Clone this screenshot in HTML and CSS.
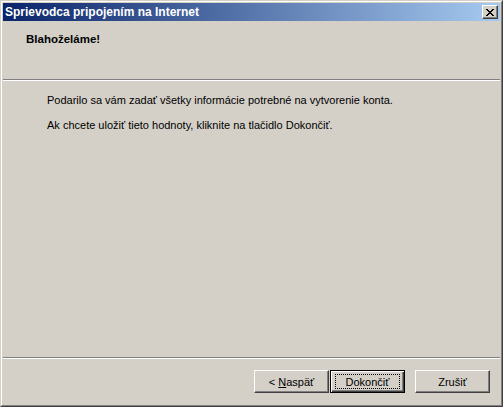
FILE: index.html
```html
<!DOCTYPE html>
<html>
<head>
<meta charset="utf-8">
<link rel="stylesheet" href="styles.css">
</head>
<body>
<div class="window">
  <div class="frame">
    <div class="titlebar">
      <span class="title">Sprievodca pripojením na Internet</span>
      <button class="close" aria-label="Zavrieť">
        <svg width="8" height="7" viewBox="0 0 8 7" shape-rendering="crispEdges">
          <path d="M0 0h2v1h-2zM6 0h2v1h-2zM1 1h2v1h-2zM5 1h2v1h-2zM2 2h4v1h-4zM3 3h2v1h-2zM2 4h4v1h-4zM1 5h2v1h-2zM5 5h2v1h-2zM0 6h2v1h-2zM6 6h2v1h-2z" fill="#000"/>
        </svg>
      </button>
    </div>
    <div class="header">
      <div class="heading">Blahoželáme!</div>
    </div>
    <div class="sep"></div>
    <div class="content">
      <p>Podarilo sa vám zadať všetky informácie potrebné na vytvorenie konta.</p>
      <p>Ak chcete uložiť tieto hodnoty, kliknite na tlačidlo Dokončiť.</p>
    </div>
    <div class="sep"></div>
    <div class="footer">
      <button class="btn">&lt;&nbsp;<u>N</u>aspäť</button>
      <button class="btn default"><span class="focus">Dokončiť</span></button>
      <button class="btn cancel">Zrušiť</button>
    </div>
  </div>
</div>
</body>
</html>
```

FILE: styles.css
```css
html, body {
  margin: 0;
  padding: 0;
  background: #d4d0c8;
}

.window {
  width: 503px;
  height: 407px;
  box-sizing: border-box;
  border: 1px solid;
  border-color: #d4d0c8 #404040 #404040 #d4d0c8;
  background: #d4d0c8;
  font-family: "Liberation Sans", Arial, sans-serif;
  font-size: 11px;
  color: #000;
}

.frame {
  height: 100%;
  box-sizing: border-box;
  border: 1px solid;
  border-color: #ffffff #808080 #808080 #ffffff;
  padding: 1px;
  display: flex;
  flex-direction: column;
}

.titlebar {
  height: 18px;
  flex: none;
  display: flex;
  align-items: center;
  justify-content: space-between;
  padding: 0 2px 0 2px;
  background: linear-gradient(to right, #0a246a, #a6caf0);
  color: #fff;
}

.title {
  font-weight: bold;
  font-size: 12px;
  line-height: 18px;
}

.close {
  width: 16px;
  height: 14px;
  padding: 0;
  margin: 0;
  box-sizing: border-box;
  background: #d4d0c8;
  border: 1px solid;
  border-color: #ffffff #404040 #404040 #ffffff;
  box-shadow: inset -1px -1px #808080;
  display: flex;
  align-items: center;
  justify-content: center;
}

.close svg {
  display: block;
}

.header {
  height: 58px;
  flex: none;
  box-sizing: border-box;
  padding: 12px 0 0 23px;
}

.heading {
  font-weight: bold;
  font-size: 11.5px;
  line-height: 13px;
}

.sep {
  flex: none;
  height: 0;
  border-top: 1px solid #808080;
  border-bottom: 1px solid #ffffff;
}

.content {
  flex: 1;
  box-sizing: border-box;
  padding: 13px 0 0 44px;
}

.content p {
  margin: 0 0 12px 0;
  line-height: 13px;
}

.footer {
  height: 45px;
  flex: none;
  box-sizing: border-box;
  display: flex;
  justify-content: flex-end;
  align-items: flex-start;
  padding: 11px 10px 0 0;
}

.btn {
  width: 75px;
  height: 23px;
  box-sizing: border-box;
  margin: 0;
  padding: 0;
  background: #d4d0c8;
  border: 1px solid;
  border-color: #ffffff #404040 #404040 #ffffff;
  box-shadow: inset -1px -1px #808080;
  font-family: "Liberation Sans", Arial, sans-serif;
  font-size: 11px;
  color: #000;
  display: flex;
  align-items: center;
  justify-content: center;
}

.btn u {
  text-decoration: underline;
}

.default {
  border: 1px solid #000;
  box-shadow: inset 1px 1px #ffffff, inset -1px -1px #404040, inset -2px -2px #808080;
  margin-left: 1px;
}

.focus {
  display: flex;
  align-items: center;
  justify-content: center;
  width: 63px;
  height: 13px;
  border: 1px dotted #000;
}

.cancel {
  margin-left: 10px;
}
```
